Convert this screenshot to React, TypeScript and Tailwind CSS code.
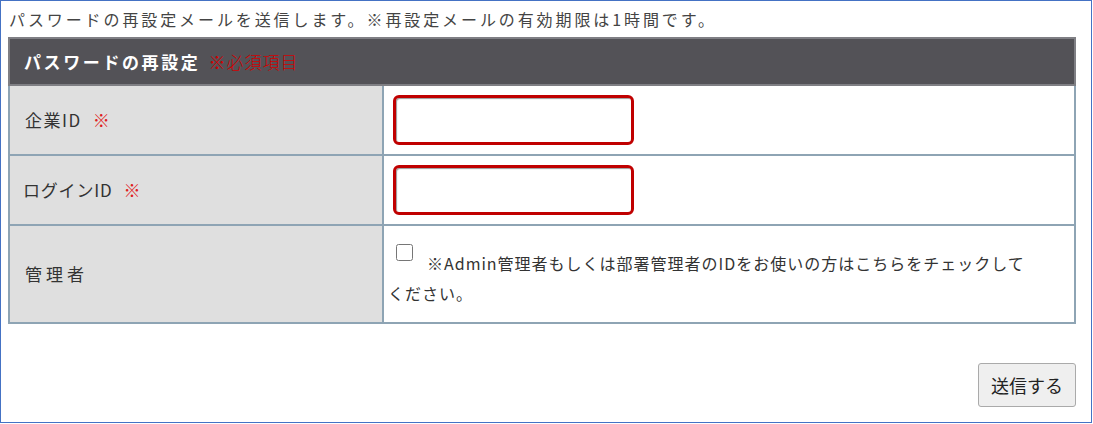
import { useState } from 'react';

const jp = { fontFamily: '"Noto Sans CJK JP", "Noto Sans", sans-serif' };

function RequiredMark() {
  return <span className="ml-[11px] font-light text-[#e02020]">※</span>;
}

export default function App() {
  const [isAdmin, setIsAdmin] = useState(false);

  return (
    <div style={jp} className="h-[424px] w-[1093px] bg-white">
      <div className="flex h-[423px] w-[1092px] flex-col border border-[#4472c4] px-[7px]">
        <p className="mt-[5px] h-[31px] pl-[1px] text-[16px] leading-[26px] tracking-[2.9px] text-[#444]">
          パスワードの再設定メールを送信します。※再設定メールの有効期限は1時間です。
        </p>

        <table className="w-[1068px] border-collapse">
          <thead>
            <tr>
              <th
                colSpan={2}
                className="h-[47px] border-2 border-[#7f7f84] bg-[#535257] pl-[14px] text-left text-[17px] font-bold tracking-[2.6px] text-white"
              >
                パスワードの再設定
                <span className="ml-[8px] font-light tracking-[1px] text-[#d00000]">※必須項目</span>
              </th>
            </tr>
          </thead>
          <tbody className="text-[17px] text-[#333]">
            <tr className="h-[70px]">
              <td className="w-[374px] border-2 border-[#8ea4b4] bg-[#dfdfdf] pl-[15px] tracking-[1.5px]">
                企業ID<RequiredMark />
              </td>
              <td className="border-2 border-[#8ea4b4] px-[9px]">
                <input className="h-[50px] w-[241px] rounded-[6px] border-[3px] border-[#c00000] shadow-[inset_1px_1px_1px_#999] outline-none" />
              </td>
            </tr>
            <tr className="h-[70px]">
              <td className="border-2 border-[#8ea4b4] bg-[#dfdfdf] pl-[13px] tracking-[0.8px]">
                ログインID<RequiredMark />
              </td>
              <td className="border-2 border-[#8ea4b4] px-[9px]">
                <input className="h-[50px] w-[241px] rounded-[6px] border-[3px] border-[#c00000] shadow-[inset_1px_1px_1px_#999] outline-none" />
              </td>
            </tr>
            <tr className="h-[98px]">
              <td className="border-2 border-[#8ea4b4] bg-[#dfdfdf] pl-[15px] tracking-[4px]">管理者</td>
              <td className="border-2 border-[#8ea4b4] pr-3 pl-[4px] pt-[22px] pb-[10px] align-top text-[16px] leading-[30px] tracking-[1px]">
                <label>
                  <input
                    type="checkbox"
                    checked={isAdmin}
                    onChange={e => setIsAdmin(e.target.checked)}
                    className="relative -top-[13px] mr-[14px] ml-[8px] h-[17px] w-[17px] align-middle"
                  />
                  ※Admin管理者もしくは部署管理者のIDをお使いの方はこちらをチェックして
                  <br />
                  ください。
                </label>
              </td>
            </tr>
          </tbody>
        </table>

        <div className="mt-[39px] flex w-[1068px] justify-end">
          <button className="h-[44px] w-[98px] rounded-[3px] border border-[#aaa] bg-[#efefef] text-[18px] text-[#222]">
            送信する
          </button>
        </div>
      </div>
    </div>
  );
}
